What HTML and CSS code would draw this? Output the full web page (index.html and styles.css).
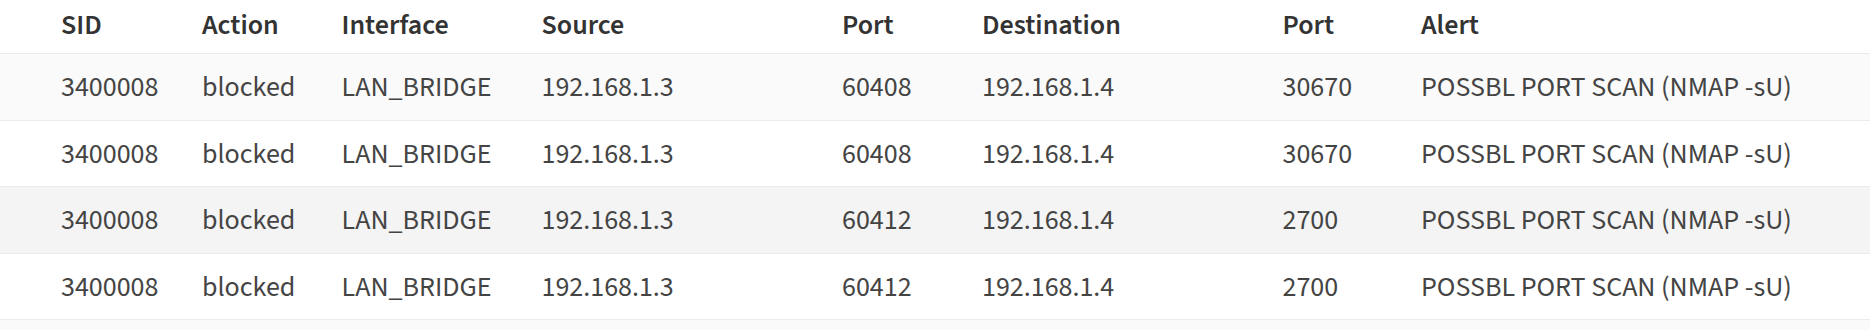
FILE: index.html
```html
<!DOCTYPE html>
<html>
<head>
<meta charset="utf-8">
<link rel="stylesheet" href="styles.css">
</head>
<body>
<table class="alerts">
  <colgroup>
    <col class="c-sid"><col class="c-action"><col class="c-iface"><col class="c-src">
    <col class="c-sport"><col class="c-dst"><col class="c-dport"><col class="c-alert">
  </colgroup>
  <thead>
    <tr>
      <th>SID</th><th>Action</th><th>Interface</th><th>Source</th>
      <th>Port</th><th>Destination</th><th>Port</th><th>Alert</th>
    </tr>
  </thead>
  <tbody>
    <tr class="odd">
      <td>3400008</td><td>blocked</td><td>LAN_BRIDGE</td><td>192.168.1.3</td>
      <td>60408</td><td>192.168.1.4</td><td>30670</td><td>POSSBL PORT SCAN (NMAP -sU)</td>
    </tr>
    <tr>
      <td>3400008</td><td>blocked</td><td>LAN_BRIDGE</td><td>192.168.1.3</td>
      <td>60408</td><td>192.168.1.4</td><td>30670</td><td>POSSBL PORT SCAN (NMAP -sU)</td>
    </tr>
    <tr class="odd hover">
      <td>3400008</td><td>blocked</td><td>LAN_BRIDGE</td><td>192.168.1.3</td>
      <td>60412</td><td>192.168.1.4</td><td>2700</td><td>POSSBL PORT SCAN (NMAP -sU)</td>
    </tr>
    <tr>
      <td>3400008</td><td>blocked</td><td>LAN_BRIDGE</td><td>192.168.1.3</td>
      <td>60412</td><td>192.168.1.4</td><td>2700</td><td>POSSBL PORT SCAN (NMAP -sU)</td>
    </tr>
    <tr class="odd filler">
      <td></td><td></td><td></td><td></td><td></td><td></td><td></td><td></td>
    </tr>
  </tbody>
</table>
</body>
</html>
```
FILE: styles.css
```css
html, body {
  margin: 0;
  padding: 0;
  background: #ffffff;
}
body {
  font-family: "Source Sans 3", "Source Sans Pro", Roboto, sans-serif;
  font-size: 28px;
  color: #444444;
  overflow: hidden;
}
.alerts {
  width: 1870px;
  border-collapse: collapse;
  table-layout: fixed;
}
.c-sid { width: 181px; }
.c-action { width: 139.5px; }
.c-iface { width: 200px; }
.c-src { width: 300.5px; }
.c-sport { width: 140px; }
.c-dst { width: 300.5px; }
.c-dport { width: 138.5px; }
.c-alert { width: auto; }

.alerts th,
.alerts td {
  text-align: left;
  white-space: nowrap;
  line-height: 42px;
  padding: 0 0 0 21px;
  vertical-align: middle;
}
.alerts th:first-child,
.alerts td:first-child {
  padding-left: 61px;
}
.alerts th {
  font-weight: 600;
  color: #333333;
  padding-top: 4px;
  padding-bottom: 7.25px;
  border-bottom: 1.75px solid #ebebeb;
}
.alerts td {
  font-weight: 400;
  padding-top: 11.75px;
  padding-bottom: 11.75px;
  border-bottom: 1.75px solid #ebebeb;
}
.alerts tr.odd td {
  background: #fafafa;
}
.alerts tr.hover td {
  background: #f4f4f4;
}
.alerts tr.filler td {
  height: 42px;
}
```
